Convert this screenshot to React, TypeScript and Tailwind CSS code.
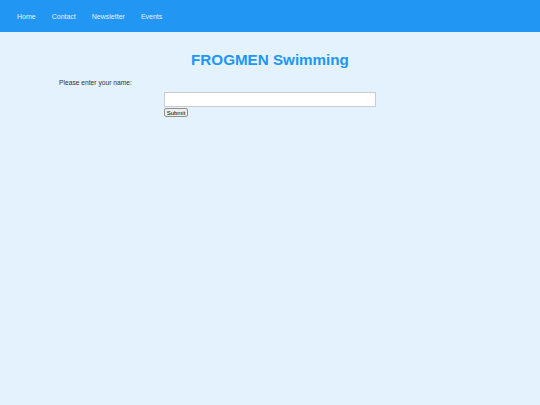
export default function App() {
  const links = ['Home', 'Contact', 'Newsletter', 'Events'];
  return (
    <div className="min-h-screen bg-[#e3f2fd] font-['Liberation_Sans',Arial,sans-serif]">
      <nav className="h-8 bg-[#2196f3] flex items-center pl-[17px] pt-px gap-4">
        {links.map((l) => (
          <a key={l} className="text-[7px] text-[#e3f2fd] leading-none">{l}</a>
        ))}
      </nav>
      <main className="pt-[20px]">
        <h1 className="text-center text-[15.2px] font-bold text-[#2196f3] leading-none">FROGMEN Swimming</h1>
        <p className="mt-[12px] ml-[59px] text-[6.7px] text-[#333] leading-[7px]">Please enter your name:</p>
        <div className="ml-[164px] mt-[6px] flex flex-col items-start">
          <input type="text" className="w-[212px] h-[15px] bg-white border border-[#ccc] outline-none" />
          <button className="mt-[1px] h-[9px] w-[24px] text-[6px] leading-none bg-[#efefef] border border-[#8f8f8f] rounded-[2px] text-black">Submit</button>
        </div>
      </main>
    </div>
  );
}
